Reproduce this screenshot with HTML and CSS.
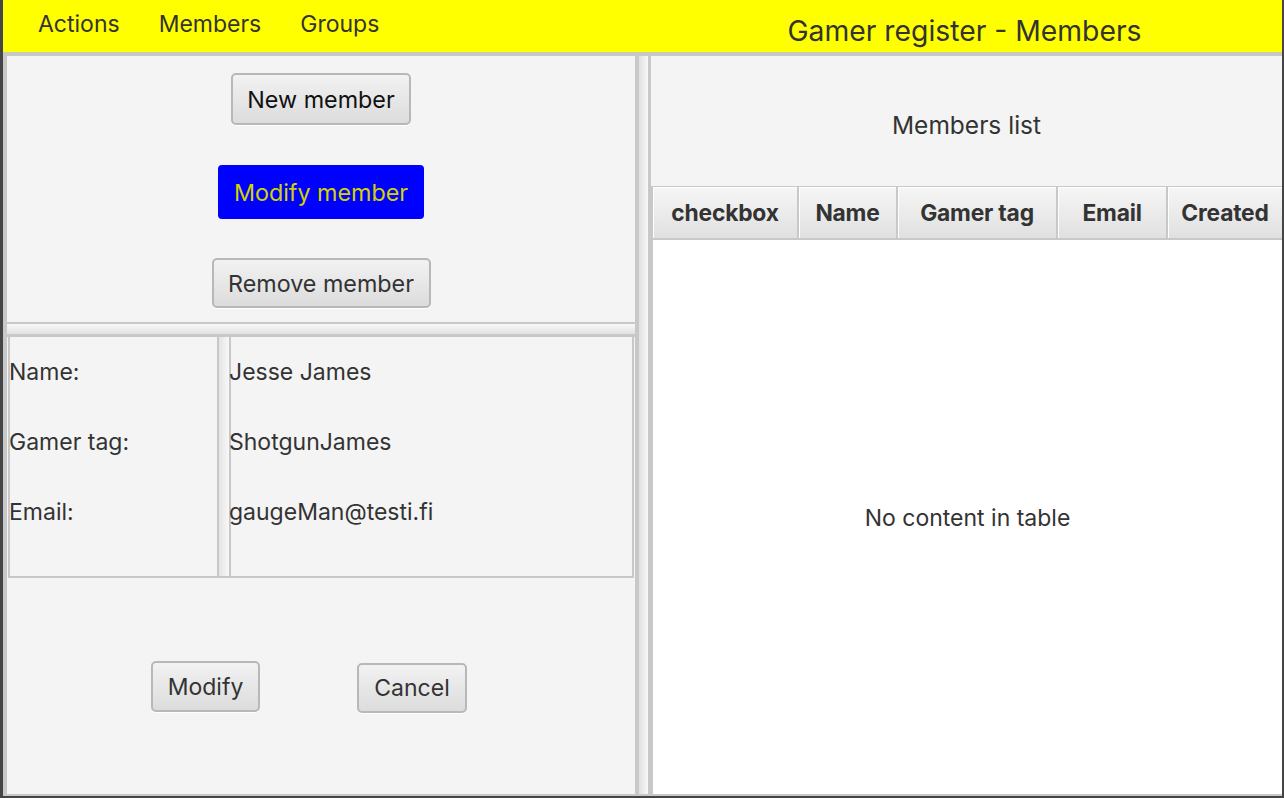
FILE: index.html
```html
<!DOCTYPE html>
<html>
<head>
<meta charset="utf-8">
<link rel="stylesheet" href="styles.css">
</head>
<body>
<div class="window">
  <header class="topbar">
    <nav class="menu">
      <span class="menu-item">Actions</span>
      <span class="menu-item">Members</span>
      <span class="menu-item">Groups</span>
    </nav>
    <div class="title">Gamer register - Members</div>
  </header>
  <div class="split">
    <section class="left">
      <div class="actions">
        <button class="btn btn-dark">New member</button>
        <button class="btn btn-blue">Modify member</button>
        <button class="btn">Remove member</button>
      </div>
      <div class="hdivider"></div>
      <div class="editor">
        <div class="grid">
          <div class="col col-labels">
            <div class="cell">Name:</div>
            <div class="cell">Gamer tag:</div>
            <div class="cell">Email:</div>
          </div>
          <div class="vdivider"></div>
          <div class="col col-values">
            <div class="cell">Jesse James</div>
            <div class="cell">ShotgunJames</div>
            <div class="cell">gaugeMan@testi.fi</div>
          </div>
        </div>
        <div class="form-buttons">
          <button class="btn btn-modify">Modify</button>
          <button class="btn btn-cancel">Cancel</button>
        </div>
      </div>
    </section>
    <div class="vsplit"></div>
    <section class="right">
      <div class="list-title">Members list</div>
      <div class="table">
        <div class="thead">
          <div class="th th-check">checkbox</div>
          <div class="th th-name">Name</div>
          <div class="th th-tag">Gamer tag</div>
          <div class="th th-email">Email</div>
          <div class="th th-created">Created</div>
        </div>
        <div class="tbody">No content in table</div>
      </div>
    </section>
  </div>
</div>
</body>
</html>
```
FILE: styles.css
```css
* { box-sizing: border-box; }
html, body {
  margin: 0;
  padding: 0;
  width: 1284px;
  height: 798px;
  overflow: hidden;
  background: #454545;
  font-family: Inter, "Noto Sans", sans-serif;
  color: #333;
}
.window {
  margin-left: 3px;
  width: 1279px;
  height: 796px;
  display: flex;
  flex-direction: column;
  background: #c8c8c8;
}
.topbar {
  height: 52px;
  background: #ffff00;
  display: flex;
  align-items: flex-start;
  position: relative;
}
.menu {
  display: flex;
  padding-left: 35px;
  padding-top: 10px;
}
.menu-item {
  font-size: 23px;
  line-height: 28px;
  margin-right: 39px;
  color: #333;
}
.title {
  position: absolute;
  left: 644px;
  right: 0;
  top: 13px;
  text-align: center;
  font-size: 28.3px;
  line-height: 36px;
  color: #333;
}
.split {
  flex: 1;
  display: flex;
  padding: 4px 0 2px 4px;
  min-height: 0;
}
.left {
  width: 628px;
  display: flex;
  flex-direction: column;
}
.actions {
  height: 266px;
  background: #f4f4f4;
  display: flex;
  flex-direction: column;
  align-items: center;
  padding-top: 17px;
}
.btn {
  font-family: Inter, "Noto Sans", sans-serif;
  font-size: 23.3px;
  color: #333;
  background: linear-gradient(#f2f2f2, #dcdcdc);
  border: 2px solid #b8b8b8;
  border-radius: 5px;
  padding: 0;
  box-shadow: 0 1px 0 #ffffff;
}
.actions .btn { height: 52px; }
.btn-dark { width: 180px; color: #111; }
.btn-blue {
  margin-top: 40px;
  width: 206px;
  height: 54px !important;
  background: #0000ff;
  border: none;
  border-radius: 4px;
  color: #d2d200;
  box-shadow: none;
}
.actions .btn:last-child {
  margin-top: 39px;
  width: 219px;
  height: 50px;
}
.hdivider {
  height: 15px;
  border-top: 2px solid #c8c8c8;
  border-bottom: 3px solid #c8c8c8;
  background: linear-gradient(#f8f8f8, #e2e2e2);
}
.editor {
  flex: 1;
  background: #f4f4f4;
  display: flex;
  flex-direction: column;
}
.grid {
  height: 241px;
  display: flex;
  border: 2px solid #c8c8c8;
  border-top: none;
  margin-left: 1px;
  margin-right: 1px;
}
.col {
  display: flex;
  flex-direction: column;
}
.col-labels { width: 207px; }
.col-values { flex: 1; }
.cell {
  height: 70px;
  display: flex;
  align-items: center;
  font-size: 23px;
  color: #333;
}
.col-labels .cell { margin-left: -1px; }
.col-values .cell { margin-left: -2px; }
.vdivider {
  width: 14px;
  border-left: 2px solid #c8c8c8;
  border-right: 2px solid #c8c8c8;
  background: linear-gradient(90deg, #e4e4e4, #f8f8f8);
}
.form-buttons {
  display: flex;
  align-items: flex-start;
  padding-top: 83px;
  padding-left: 144px;
  gap: 97px;
}
.form-buttons .btn { font-size: 23px; }
.btn-modify { width: 109px; height: 51px; }
.btn-cancel { width: 110px; height: 50px; margin-top: 2px; }
.vsplit {
  width: 16px;
  border-left: 4px solid #c8c8c8;
  border-right: 3px solid #c8c8c8;
  background: linear-gradient(90deg, #e0e0e0, #f8f8f8);
}
.right {
  flex: 1;
  display: flex;
  flex-direction: column;
  background: #f4f4f4;
}
.list-title {
  height: 130px;
  display: flex;
  align-items: center;
  justify-content: center;
  padding-top: 8px;
  font-size: 24.5px;
  color: #333;
}
.table {
  flex: 1;
  display: flex;
  flex-direction: column;
  border-top: 1px solid #c8c8c8;
  border-left: 2px solid #c8c8c8;
  background: #fff;
}
.thead {
  display: flex;
  height: 53px;
  border-bottom: 2px solid #c8c8c8;
}
.th {
  display: flex;
  align-items: center;
  justify-content: center;
  font-size: 22.8px;
  font-weight: 700;
  color: #333;
  letter-spacing: -0.2px;
  background: linear-gradient(#f6f6f6, #e0e0e0);
  border-right: 2px solid #c8c8c8;
  box-shadow: inset 1px 1px 0 #fff;
}
.th-check { width: 146px; }
.th-name { width: 99px; }
.th-tag { width: 160px; }
.th-email { width: 110px; }
.th-created { flex: 1; border-right: none; }
.tbody {
  flex: 1;
  display: flex;
  align-items: center;
  justify-content: center;
  font-size: 23px;
  color: #333;
  padding-top: 1px;
}
```
